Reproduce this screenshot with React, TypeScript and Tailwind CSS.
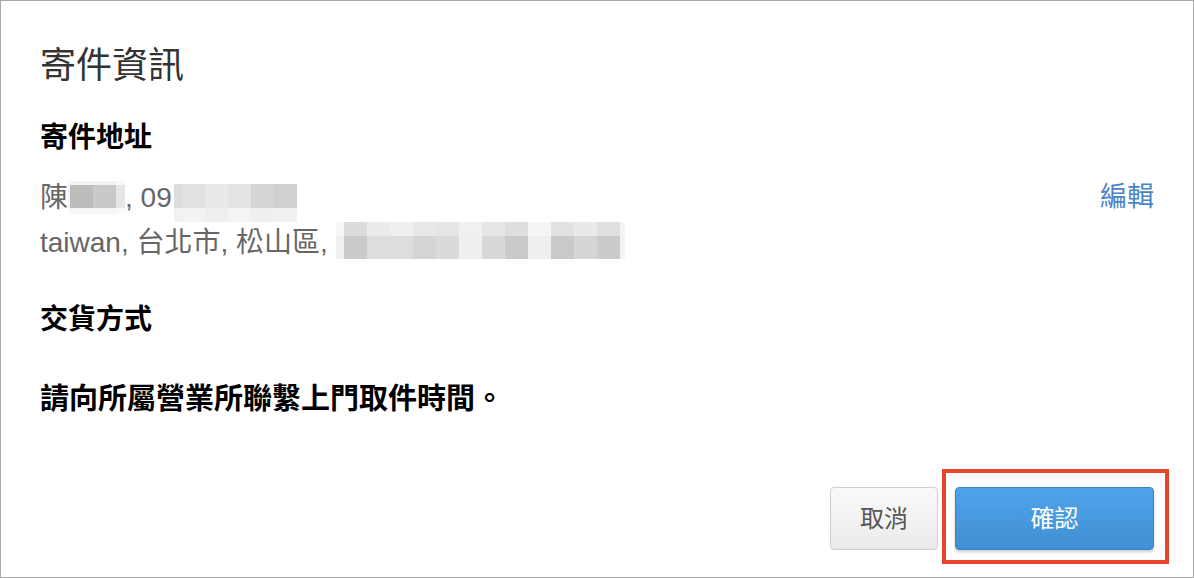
import React from "react";

// pixelated redaction blocks, drawn as rows of grey cells
type MosaicRow = { h: number; cells: [number, string][] };

function Mosaic({ rows, className }: { rows: MosaicRow[]; className?: string }) {
  return (
    <span className={`inline-flex flex-col align-middle ${className ?? ""}`}>
      {rows.map((row, i) => (
        <span key={i} className="flex" style={{ height: row.h }}>
          {row.cells.map(([w, c], j) => (
            <span key={j} style={{ width: w, background: c }} />
          ))}
        </span>
      ))}
    </span>
  );
}

const nameMosaic: MosaicRow[] = [
  { h: 4, cells: [[2, "#fbfbfb"], [23, "#f4f4f4"], [23, "#f3f3f3"], [9, "#f8f8f8"]] },
  { h: 23, cells: [[2, "#f5f5f5"], [23, "#bcbcbc"], [23, "#c9c9c9"], [9, "#e6e6e6"]] },
  { h: 6, cells: [[2, "#fcfcfc"], [23, "#f6f6f6"], [23, "#f6f6f6"], [9, "#fafafa"]] },
];

const phoneMosaic: MosaicRow[] = [
  {
    h: 24,
    cells: [
      [8, "#dcdcdc"],
      [23, "#e2e2e2"],
      [23, "#e9e9e9"],
      [23, "#e3e3e3"],
      [23, "#d6d6d6"],
      [23, "#d0d0d0"],
    ],
  },
  {
    h: 14,
    cells: [
      [8, "#f2f2f2"],
      [23, "#f3f3f3"],
      [23, "#eeeeee"],
      [23, "#f4f4f4"],
      [23, "#efefef"],
      [23, "#f1f1f1"],
    ],
  },
];

const streetTop = ["#f7f7f7", "#dcdcdc", "#ebebeb", "#efefef", "#e8e8e8", "#e6e6e6", "#f0f0f0", "#e6e6e6", "#dedede", "#f5f5f5", "#e2e2e2", "#e9e9e9", "#e0e0e0", "#f5f5f5"];
const streetBottom = ["#f0f0f0", "#cbcbcb", "#dedede", "#dddddd", "#d5d5d5", "#dadada", "#efefef", "#d8d8d8", "#cacaca", "#efefef", "#cacaca", "#d6d6d6", "#cbcbcb", "#f3f3f3"];
const streetWidths = [8, 23, 23, 23, 23, 23, 23, 23, 23, 23, 23, 23, 23, 5];

const streetMosaic: MosaicRow[] = [
  { h: 14, cells: streetWidths.map((w, i) => [w, streetTop[i]] as [number, string]) },
  { h: 23, cells: streetWidths.map((w, i) => [w, streetBottom[i]] as [number, string]) },
];

export default function App() {
  return (
    <div
      className="w-[1194px] h-[578px] bg-white border border-[#a9a9a9] flex flex-col overflow-hidden"
      style={{ fontFamily: '"Liberation Sans", "Noto Sans CJK TC", sans-serif' }}
    >
      <div className="pl-[39px] pr-[39px] pt-[43px]">
        <h2 className="text-[36px] leading-[44px] text-[#333] font-normal">寄件資訊</h2>

        <h3 className="mt-[32px] text-[28px] leading-[36px] font-bold text-black">寄件地址</h3>

        <div className="mt-[19px] flex items-start justify-between">
          <div className="text-[28px] leading-[45px] text-[#666]">
            <div className="flex items-center h-[45px]">
              <span>陳</span>
              <Mosaic rows={nameMosaic} className="mt-[-1px]" />
              <span>, 09</span>
              <Mosaic rows={phoneMosaic} className="ml-[2px] mt-[10px]" />
            </div>
            <div className="flex items-center h-[45px]">
              <span className="whitespace-pre">taiwan, 台北市, 松山區, </span>
              <Mosaic rows={streetMosaic} className="mt-[-4px]" />
            </div>
          </div>
          <a className="text-[27px] leading-[45px] text-[#4a85c4] cursor-pointer">編輯</a>
        </div>

        <h3 className="mt-[37px] text-[28px] leading-[36px] font-bold text-black">交貨方式</h3>

        <p className="mt-[43px] text-[29px] leading-[36px] font-bold text-black">請向所屬營業所聯繫上門取件時間。</p>
      </div>

      <div className="mt-auto flex justify-end gap-[17px] pr-[39px] pb-[27px]">
        <button className="w-[108px] h-[63px] rounded-[4px] border border-[#cfcfcf] bg-gradient-to-b from-[#f9f9f9] to-[#ebebeb] text-[24px] text-[#555]">
          取消
        </button>
        <div className="relative">
          <button className="w-[199px] h-[63px] rounded-[4px] border border-[#3a82c4] bg-gradient-to-b from-[#4fa3ea] to-[#418fd4] text-[24px] text-white shadow-[0_2px_3px_rgba(0,0,0,0.2)]">
            確認
          </button>
          <span className="absolute left-[-13px] right-[-15px] top-[-18px] bottom-[-14px] border-[4px] border-[#e8432b] pointer-events-none" />
        </div>
      </div>
    </div>
  );
}
